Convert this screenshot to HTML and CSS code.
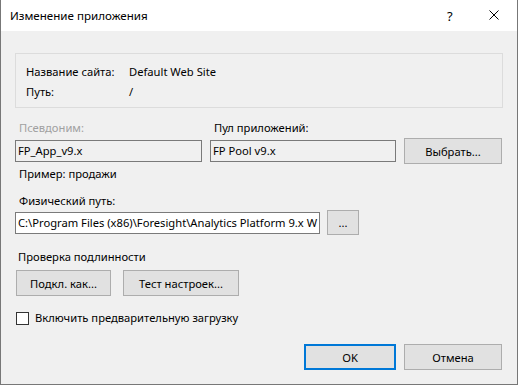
FILE: index.html
```html
<!DOCTYPE html>
<html lang="ru">

<head>
    <meta charset="UTF-8">
    <meta name="viewport" content="width=device-width, initial-scale=1.0">
    <title>Изменение приложения</title>
    <link rel="stylesheet" href="styles.css">
</head>

<body>
    <div class="window">
        <!-- Title bar -->
        <div class="titlebar">
            <span class="title">Изменение приложения</span>
            <span class="help">?</span>
            <svg class="close" width="10" height="10" viewBox="0 0 10 10">
                <path d="M0.5 0.5 L9.5 9.5 M9.5 0.5 L0.5 9.5" stroke="#000" stroke-width="1" fill="none" />
            </svg>
        </div>

        <div class="content">
            <!-- Site info -->
            <div class="info-box">
                <div class="info-row">
                    <span class="info-label">Название сайта:</span>
                    <span>Default Web Site</span>
                </div>
                <div class="info-row">
                    <span class="info-label">Путь:</span>
                    <span>/</span>
                </div>
            </div>

            <!-- Alias and pool -->
            <div class="fields">
                <span class="label disabled">Псевдоним:</span>
                <span class="label">Пул приложений:</span>
                <span></span>
                <div class="field readonly">FP_App_v9.x</div>
                <div class="field readonly">FP Pool v9.x</div>
                <button class="btn btn-select">Выбрать...</button>
            </div>

            <div class="label hint">Пример: продажи</div>

            <div class="label path-label">Физический путь:</div>
            <div class="path-row">
                <div class="field path">C:\Program Files (x86)\Foresight\Analytics Platform 9.x W</div>
                <button class="btn btn-browse">...</button>
            </div>

            <div class="label auth-label">Проверка подлинности</div>
            <div class="auth-row">
                <button class="btn btn-connect">Подкл. как...</button>
                <button class="btn btn-test">Тест настроек...</button>
            </div>

            <label class="check-row">
                <span class="checkbox"></span>
                <span>Включить предварительную загрузку</span>
            </label>

            <!-- Dialog buttons -->
            <div class="footer">
                <button class="btn btn-ok">OK</button>
                <button class="btn btn-cancel">Отмена</button>
            </div>
        </div>
    </div>
</body>

</html>
```

FILE: styles.css
```css
/* Windows dialog look */
body {
    margin: 0;
    font-family: "Noto Sans", Arial, sans-serif;
    font-size: 11.2px;
    color: #000;
}

.window {
    width: 516px;
    height: 384px;
    border: 1px solid #777;
    border-top: none;
    display: flex;
    flex-direction: column;
    background: #f0f0f0;
}

.titlebar {
    height: 31px;
    background: #fff;
    display: flex;
    align-items: center;
    padding-left: 9px;
    position: relative;
}

.title {
    font-size: 11.6px;
    line-height: 16px;
    margin-top: 1px;
}

.help {
    position: absolute;
    left: 446px;
    top: 8px;
    font-size: 13px;
    line-height: 16px;
}

.close {
    position: absolute;
    left: 488px;
    top: 10px;
}

.content {
    flex: 1;
    padding: 0 14px 0 14px;
    display: flex;
    flex-direction: column;
    line-height: 16px;
}

.info-box {
    margin-top: 22px;
    border: 1px solid #dcdcdc;
    padding: 10px 10px 7px 10px;
    display: flex;
    flex-direction: column;
    gap: 4px;
}

.info-row {
    display: flex;
}

.info-label {
    width: 103px;
}

.label {
    padding-left: 4px;
}

.disabled {
    color: #a0a0a0;
}

.fields {
    margin-top: 12px;
    display: grid;
    grid-template-columns: 187px 186px 98px;
    grid-template-rows: 16px 26px;
    column-gap: 8px;
    row-gap: 2px;
    align-items: center;
}

.field {
    height: 22px;
    box-sizing: border-box;
    border: 1px solid #7a7a7a;
    padding: 0 2px;
    line-height: 20px;
    white-space: nowrap;
    overflow: hidden;
}

.readonly {
    background: #f0f0f0;
}

.btn {
    font-family: inherit;
    font-size: 11.2px;
    color: #000;
    background: #e1e1e1;
    border: 1px solid #adadad;
    height: 26px;
    padding: 0;
    box-sizing: border-box;
}

.hint {
    margin-top: 2px;
}

.path-label {
    margin-top: 11px;
}

.path-row {
    display: flex;
    gap: 7px;
    align-items: flex-start;
    height: 25px;
    margin-top: 1px;
}

.path {
    width: 305px;
    background: #fff;
    margin-top: 2px;
    padding-right: 0;
}

.btn-browse {
    width: 32px;
    height: 25px;
}

.auth-label {
    margin-top: 14px;
    padding-left: 3px;
}

.auth-row {
    display: flex;
    gap: 12px;
    margin-top: 5px;
    padding-left: 1px;
}

.btn-connect {
    width: 95px;
}

.btn-test {
    width: 116px;
}

.check-row {
    margin-top: 14px;
    display: flex;
    align-items: center;
    gap: 6px;
    padding-left: 1px;
}

.checkbox {
    width: 13px;
    height: 13px;
    box-sizing: border-box;
    border: 1px solid #333;
    background: #fff;
}

.footer {
    margin-top: 18px;
    display: flex;
    justify-content: flex-end;
    gap: 8px;
    padding-right: 1px;
}

.btn-ok {
    width: 92px;
    border: 2px solid #0078d7;
}

.btn-cancel {
    width: 98px;
}
```
